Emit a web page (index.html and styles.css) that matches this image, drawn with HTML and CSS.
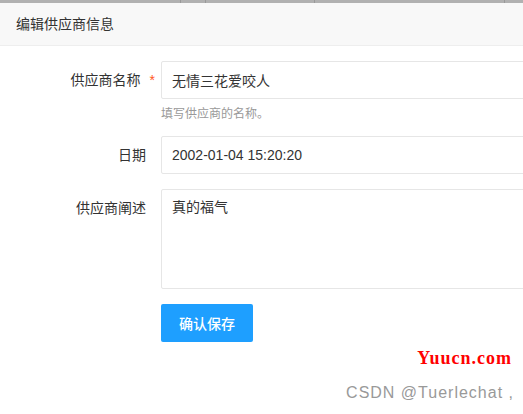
FILE: index.html
```html
<!DOCTYPE html>
<html lang="zh-CN">
<head>
  <meta charset="UTF-8">
  <meta name="viewport" content="width=device-width, initial-scale=1.0">
  <title>编辑供应商信息</title>
  <link rel="stylesheet" href="styles.css">
</head>
<body>
  <div class="table-edge">
    <div class="cell c1"></div>
    <div class="cell c2"></div>
    <div class="cell c3"></div>
    <div class="cell c4"></div>
    <div class="cell c5"></div>
  </div>
  <div class="layer-title">编辑供应商信息</div>
  <form class="form">
    <div class="form-item">
      <label class="form-label required">供应商名称<span class="star">*</span></label>
      <div class="form-block">
        <input type="text" class="form-input" value="无情三花爱咬人">
        <div class="form-tip">填写供应商的名称。</div>
      </div>
    </div>
    <div class="form-item">
      <label class="form-label">日期</label>
      <div class="form-block">
        <input type="text" class="form-input" value="2002-01-04 15:20:20">
      </div>
    </div>
    <div class="form-item">
      <label class="form-label">供应商阐述</label>
      <div class="form-block">
        <textarea class="form-textarea">真的福气</textarea>
      </div>
    </div>
    <div class="form-item">
      <div class="form-label"></div>
      <div class="form-block">
        <button type="button" class="btn">确认保存</button>
      </div>
    </div>
  </form>
  <div class="mark-site">Yuucn.com</div>
  <div class="mark-csdn">CSDN @Tuerlechat ,</div>
</body>
</html>
```
FILE: styles.css
```css
body {
  margin: 0;
  font-family: "Liberation Sans", "Noto Sans CJK SC", sans-serif;
  font-size: 14px;
  color: #333;
  background: #fff;
  position: relative;
  height: 414px;
  overflow: hidden;
}
.table-edge {
  display: flex;
  height: 3px;
  background: #b1b1b1;
  overflow: hidden;
}
.cell {
  height: 3px;
  border-right: 1px solid #999;
}
.c1 { width: 180px; }
.c2 { width: 24px; }
.c3 { width: 108px; }
.c4 { width: 189px; }
.c5 { flex: 1; border-right: none; }
.layer-title {
  height: 42px;
  line-height: 42px;
  padding-left: 16px;
  background: #f8f8f8;
  border-bottom: 1px solid #eee;
  color: #333;
  font-size: 14px;
}
.form {
  padding-top: 15px;
}
.form-item {
  display: flex;
  margin-bottom: 15px;
}
.form-label {
  width: 146px;
  padding-right: 15px;
  height: 38px;
  line-height: 38px;
  text-align: right;
  color: #333;
  flex-shrink: 0;
}
.form-label.required {
  width: 155px;
  padding-right: 6px;
}
.star {
  color: #ff5722;
  margin-left: 9px;
  font-size: 14px;
}
.form-block {
  flex: 1;
}
.form-input {
  display: block;
  box-sizing: border-box;
  width: 400px;
  height: 38px;
  padding: 0 10px;
  border: 1px solid #e6e6e6;
  border-radius: 2px;
  font: inherit;
  color: #333;
  outline: none;
}
.form-tip {
  margin-top: 7px;
  font-size: 12px;
  color: #999;
  line-height: 16px;
  margin-bottom: -1px;
}
.form-textarea {
  display: block;
  box-sizing: border-box;
  width: 400px;
  height: 100px;
  padding: 7px 10px;
  border: 1px solid #e6e6e6;
  border-radius: 2px;
  font: inherit;
  line-height: 20px;
  color: #333;
  resize: none;
  outline: none;
}
.btn {
  height: 38px;
  padding: 0 18px;
  border: none;
  border-radius: 2px;
  background: #1e9fff;
  color: #fff;
  font-family: "Noto Sans CJK SC", sans-serif;
  font-size: 14px;
  font-weight: 500;
  cursor: pointer;
}
.mark-site {
  position: absolute;
  right: 11px;
  top: 348px;
  font-family: "Liberation Serif", serif;
  font-size: 18px;
  font-weight: bold;
  letter-spacing: 1px;
  color: #f00;
}
.mark-csdn {
  position: absolute;
  right: 9px;
  top: 384px;
  font-family: "Liberation Sans", sans-serif;
  font-size: 16px;
  letter-spacing: 1px;
  color: #999;
}
```
